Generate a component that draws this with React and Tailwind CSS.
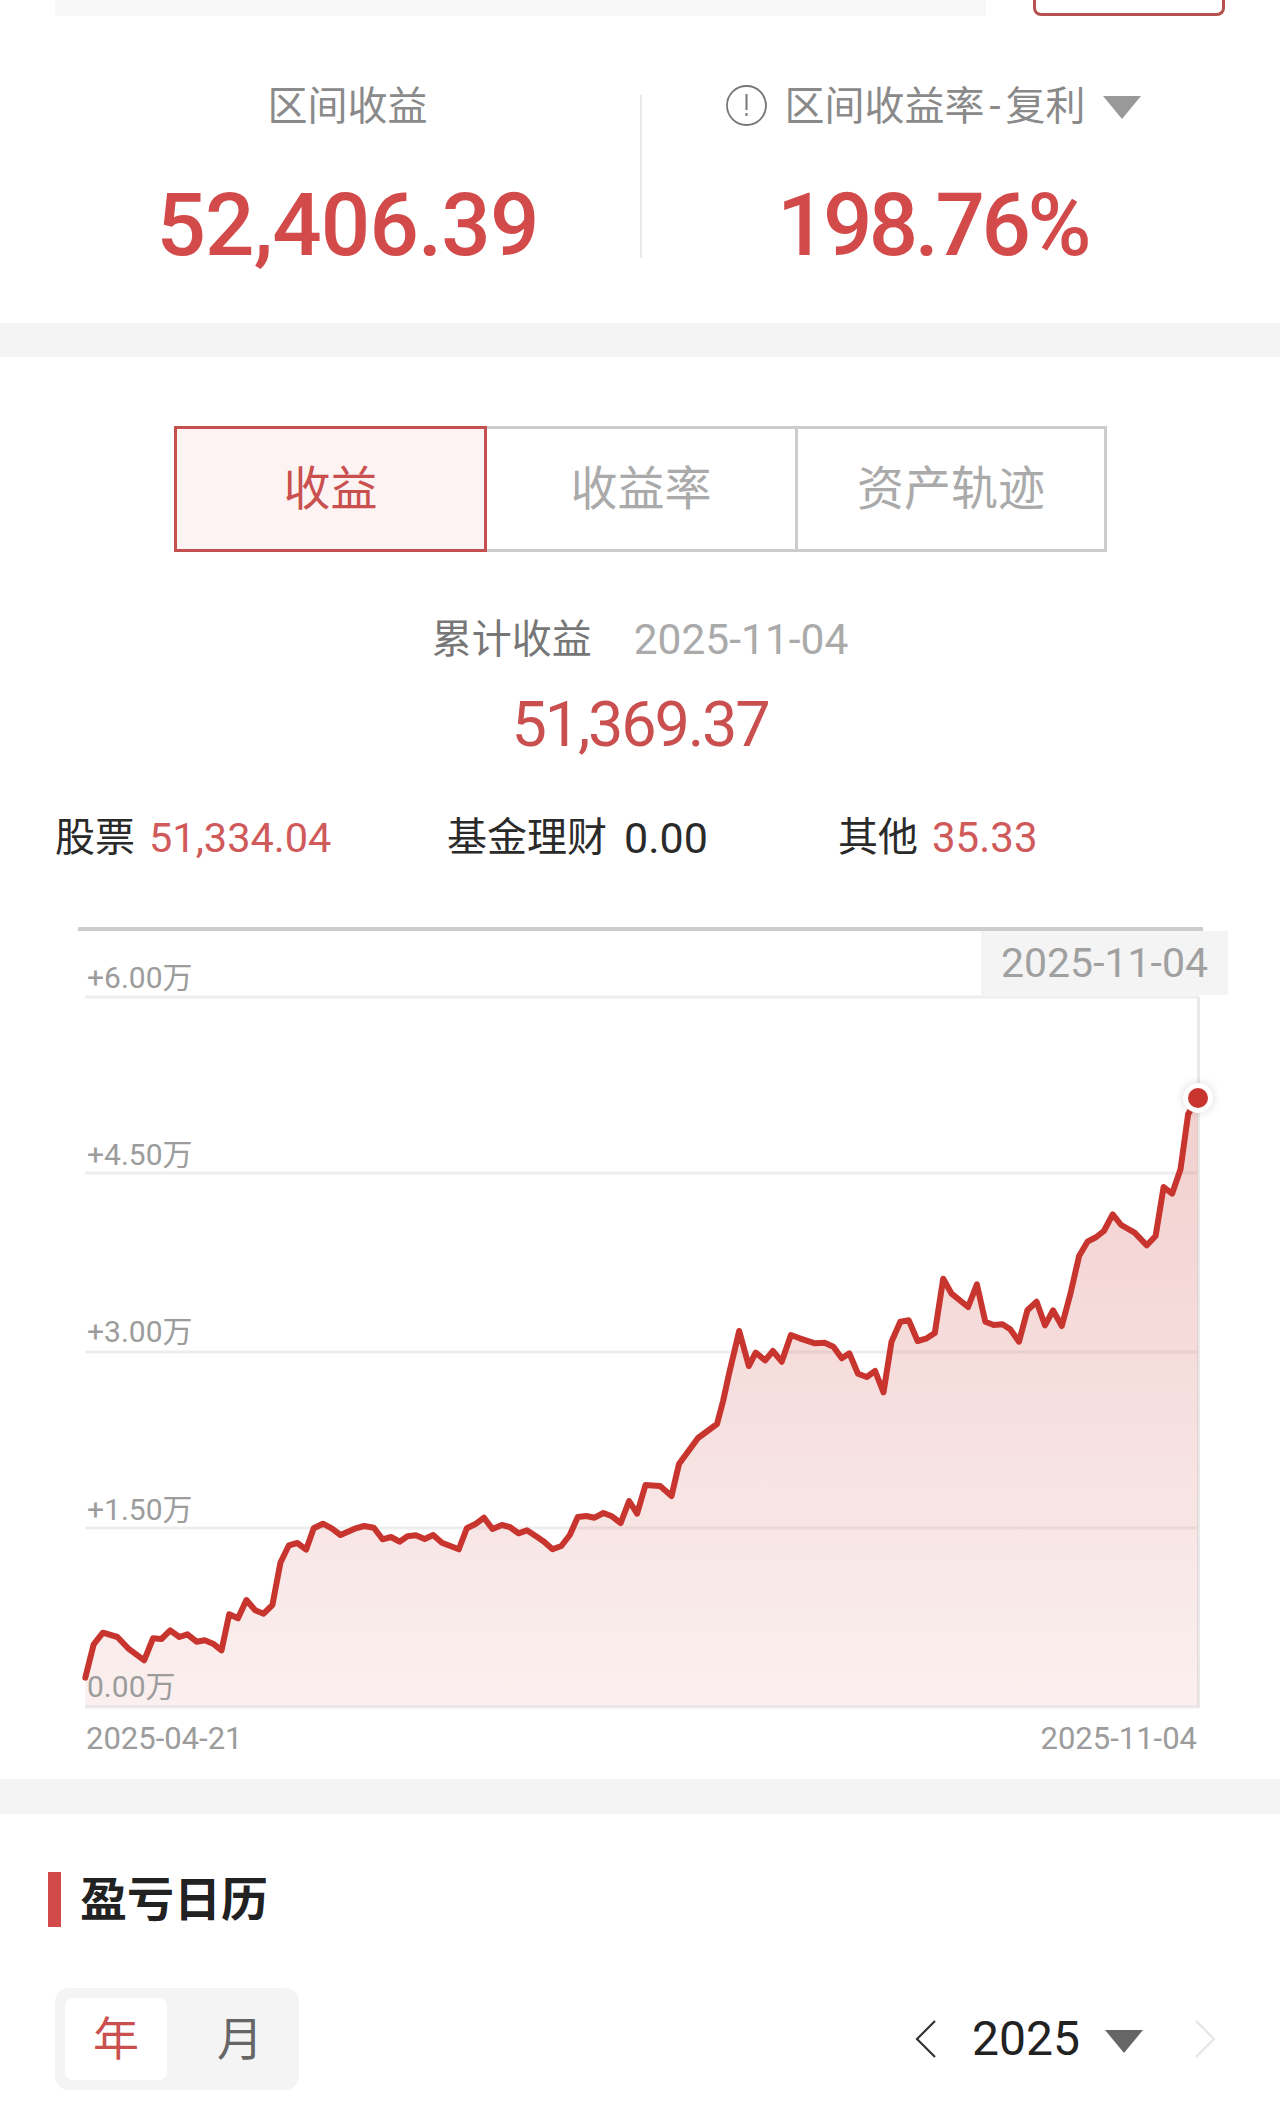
import React from 'react'

const LEFT_TRACE = [[66,1130],[88,1030],[112,995],[150,1008],[178,1042],[220,1078],[243,1012],[265,1014],[288,988],[312,1008],[333,1000],[357,1022],[378,1018],[400,1028],[422,1048],[442,940],[465,952],[487,897],[510,928],[532,938],[555,912],[576,785],[598,733],[620,726],[643,746],[663,682],[687,668],[710,682],[733,702],[770,683],[795,675],[820,680],[843,715],[865,708],[887,722],[908,706],[930,703],[953,714],[975,702],[998,725],[1042,745],[1063,682],[1087,668],[1108,650],[1130,684],[1155,672],[1175,678],[1198,697],[1220,688],[1243,705],[1265,722],[1287,745],[1310,735],[1332,702],[1353,648],[1375,645],[1397,650],[1420,636],[1442,646],[1465,666],[1487,600],[1508,638],[1530,552],[1568,555]]
const MID_TRACE = [[671.5,1495],[679,1463],[698,1437],[717,1423]]
const RIGHT_TRACE = [[165,1500],[180,1420],[207,1290],[232,1395],[250,1355],[275,1378],[295,1350],[318,1382],[342,1302],[365,1312],[405,1327],[430,1325],[453,1337],[475,1372],[495,1357],[517,1418],[540,1428],[562,1410],[584,1474],[605,1322],[628,1262],[650,1258],[673,1320],[695,1313],[718,1296],[740,1133],[762,1178],[805,1218],[828,1150],[850,1262],[872,1272],[895,1270],[915,1285],[938,1322],[960,1228],[984,1202],[1006,1273],[1027,1228],[1050,1275],[1072,1180],[1095,1065],[1117,1022],[1140,1008],[1160,990],[1183,940],[1205,972],[1240,995],[1272,1033],[1295,1005],[1316,858],[1338,878],[1360,805],[1380,640],[1405,590]]

const points = [
  ...LEFT_TRACE.map(([x, y]) => [60 + x / 2.613, 1300 + y / 3]),
  ...MID_TRACE,
  ...RIGHT_TRACE.map(([x, y]) => [660 + x / 2.613, 900 + y / 3]),
].map(([x, y]) => `${x.toFixed(1)},${y.toFixed(1)}`)

const linePath = 'M' + points.join(' L')
const areaPath = `${linePath} L1198,1706 L85,1706 Z`

const gridYs = [996, 1172, 1351, 1527, 1706]

const axisLabels = [
  { text: '+6.00万', cls: 'top-[36px]' },
  { text: '+4.50万', cls: 'top-[213px]' },
  { text: '+3.00万', cls: 'top-[390px]' },
  { text: '+1.50万', cls: 'top-[568px]' },
  { text: '0.00万', cls: 'top-[745px]' },
]

function Triangle({ className }) {
  return (
    <svg viewBox="0 0 38 23" className={className}>
      <path d="M0 0 H38 L19 23 Z" fill="currentColor" />
    </svg>
  )
}

function Chart() {
  return (
    <div className="relative h-[783px]">
      <svg viewBox="0 926 1280 783" className="block w-[1280px] h-[783px]">
        <defs>
          <linearGradient id="area" x1="0" y1="1097" x2="0" y2="1706" gradientUnits="userSpaceOnUse">
            <stop offset="0" stopColor="#c9403a" stopOpacity="0.25" />
            <stop offset="1" stopColor="#c9403a" stopOpacity="0.08" />
          </linearGradient>
        </defs>
        <rect x="78" y="926" width="1125" height="4" fill="#cdcdcd" />
        {gridYs.map((y) => (
          <rect key={y} x="85" y={y - 1.5} width="1114" height="3" fill="#eeeeee" />
        ))}
        <rect x="1197" y="996" width="3" height="711" fill="#e9e9e9" />
        <path d={areaPath} fill="url(#area)" />
        <path d={linePath} fill="none" stroke="#c8352e" strokeWidth="6" strokeLinejoin="round" strokeLinecap="round" />
      </svg>

      {axisLabels.map((l) => (
        <span key={l.text} className={`absolute left-[87px] text-[30px] leading-[30px] text-[#9c9c9c] ${l.cls}`}>{l.text}</span>
      ))}

      <div className="absolute left-[981px] top-[4px] w-[247px] h-[64px] bg-[#f4f4f4] flex items-center justify-center text-[41px] leading-none text-[#a0a0a0]">
        2025-11-04
      </div>
      <div className="absolute left-[1183px] top-[156px] w-[30px] h-[30px] rounded-full bg-[#c8352e] border-[5px] border-white shadow-[0_0_10px_rgba(0,0,0,0.15)]" />
    </div>
  )
}

export default function App() {
  return (
    <div className="w-[1280px] h-[2111px] overflow-hidden bg-white font-['Roboto','Noto_Sans_CJK_SC',sans-serif]">
      {/* search strip cut off at the top */}
      <div className="flex justify-between h-4 pl-[55px] pr-[55px]">
        <div className="w-[931px] bg-[#f8f8f8]" />
        <div className="w-[192px] border-[3px] border-t-0 border-[#b5524f] rounded-b-lg" />
      </div>

      <div className="h-[307px] pl-[55px] pt-[79px]">
        <div className="flex h-[163px]">
          <div className="w-[585px] flex flex-col items-center">
            <div className="text-[40px] leading-[40px] -mt-[8px] text-[#8a8a8a]">区间收益</div>
            <div className="mt-[56px] text-[87px] leading-[85px] font-medium tracking-[-0.01em] text-[#d24a4a]">52,406.39</div>
          </div>
          <div className="w-0.5 bg-[#e8e8e8]" />
          <div className="w-[583px] flex flex-col items-center pr-[2px]">
            <div className="flex items-center -mt-[8px] h-[40px] text-[40px] leading-[40px] text-[#8a8a8a]">
              <svg viewBox="0 0 41 41" className="w-[41px] h-[41px] mr-[17px] -mt-[4px] ml-[2px]">
                <circle cx="20.5" cy="20.5" r="19.5" fill="none" stroke="#777777" strokeWidth="1.8" />
                <rect x="19.5" y="9" width="2" height="16" fill="#777777" />
                <rect x="19.5" y="28" width="2" height="3" fill="#777777" />
              </svg>
              区间收益率<span className="mx-[5px]">-</span>复利
              <Triangle className="w-[38px] h-[23px] ml-[17px] text-[#999999]" />
            </div>
            <div className="mt-[56px] text-[87px] leading-[85px] tracking-[-0.04em] font-medium text-[#d24a4a]">198.76%</div>
          </div>
        </div>
      </div>

      <div className="h-[34px] bg-[#f4f4f4]" />

      <div className="h-[1422px] pt-[69px]">
        <div className="ml-[174px] w-[933px] h-[126px] flex text-[47px] text-[#aaaaaa]">
          <div className="w-[313px] flex items-center justify-center border-[3px] border-[#c4514f] bg-[#fdf3f2] text-[#c9504f]">收益</div>
          <div className="w-[308px] flex items-center justify-center border-y-[3px] border-[#cccccc]">收益率</div>
          <div className="w-[312px] flex items-center justify-center border-[3px] border-[#cccccc]">资产轨迹</div>
        </div>

        <div className="mt-[66px] flex justify-center gap-[42px] text-[40px] leading-[44px]">
          <span className="text-[#777777]">累计收益</span>
          <span className="text-[42.5px] text-[#aaaaaa]">2025-11-04</span>
        </div>
        <div className="mt-[27px] text-center text-[63px] leading-[72px] tracking-[-0.035em] text-[#c9504f]">51,369.37</div>

        <div className="mt-[55px] h-[44px] text-[40px] leading-[44px] text-[#2a2a2a]">
          <div className="flex pl-[55px]">
            <div className="w-[392px] flex gap-[14px]"><span>股票</span><span className="text-[41.5px] text-[#d05a5a]">51,334.04</span></div>
            <div className="w-[391px] flex gap-[17px]"><span>基金理财</span><span className="text-[43px]">0.00</span></div>
            <div className="flex gap-[14px]"><span>其他</span><span className="text-[42px] text-[#d05a5a]">35.33</span></div>
          </div>
        </div>

        <div className="mt-[67px]">
          <Chart />
        </div>

        <div className="flex justify-between pl-[86px] pr-[83px] mt-[14px] text-[31px] leading-[30px] text-[#9c9c9c]">
          <span>2025-04-21</span>
          <span>2025-11-04</span>
        </div>
      </div>

      <div className="h-[35px] bg-[#f4f4f4]" />

      <div className="pt-[58px]">
        <div className="flex items-center gap-[19px] pl-[48px] h-[55px]">
          <div className="w-[13px] h-[55px] bg-[#d24a4a]" />
          <span className="text-[47px] leading-[55px] font-bold text-[#222222]">盈亏日历</span>
        </div>

        <div className="mt-[61px] flex items-center justify-between pl-[55px] pr-[64px]">
          <div className="w-[244px] h-[102px] p-[10px] bg-[#f4f4f4] rounded-[14px] flex">
            <div className="w-[102px] rounded-lg bg-white flex items-center justify-center text-[46px] text-[#c9504f]">年</div>
            <div className="flex-1 flex items-center justify-center pl-[24px] text-[46px] text-[#666666]">月</div>
          </div>

          <div className="flex items-center">
            <svg viewBox="0 0 21 38" className="w-[21px] h-[38px]">
              <path d="M20 1 L2 19 L20 37" fill="none" stroke="#333333" strokeWidth="2.2" />
            </svg>
            <span className="ml-[36px] text-[48px] leading-[48px] text-[#222222]">2025</span>
            <Triangle className="w-[38px] h-[23px] ml-[25px] mt-[4px] text-[#666666]" />
            <svg viewBox="0 0 21 38" className="w-[21px] h-[38px] ml-[52px]">
              <path d="M1 1 L19 19 L1 37" fill="none" stroke="#e5e5e5" strokeWidth="2.2" />
            </svg>
          </div>
        </div>
      </div>
    </div>
  )
}
